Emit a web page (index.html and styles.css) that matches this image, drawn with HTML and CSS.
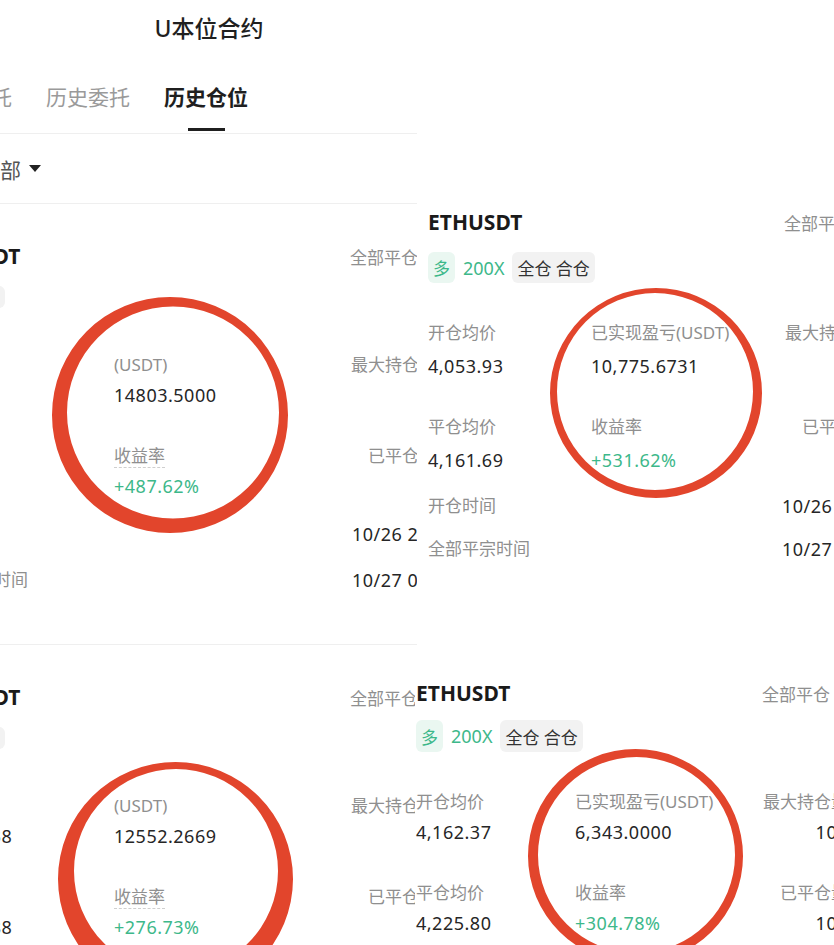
FILE: index.html
```html
<!DOCTYPE html>
<html lang="zh-CN">
<head>
    <meta charset="UTF-8">
    <title>U本位合约 - 历史仓位</title>
    <link rel="stylesheet" href="styles.css">
</head>
<body>
    <div class="collage">

        <!-- 左侧截图 -->
        <section class="panel panel-left">
            <header class="page-title">U本位合约</header>
            <nav class="tabs">
                <span class="tab">当前委托</span>
                <span class="tab">历史委托</span>
                <span class="tab active">历史仓位</span>
            </nav>
            <div class="filter">全部 <span class="caret"></span></div>

            <article class="card card-left">
                <div class="card-head">
                    <span class="symbol">ETHUSDT</span>
                    <span class="close-all">全部平仓</span>
                </div>
                <div class="tags">
                    <span class="tag tag-long">多</span>
                    <span class="tag">全仓</span>
                </div>
                <div class="stats">
                    <div class="stat"><span class="label">开仓均价</span><span class="value">4,053.9</span></div>
                    <div class="stat"><span class="label">(USDT)</span><span class="value">14803.5000</span></div>
                    <div class="stat end"><span class="label">最大持仓量</span><span class="value">5</span></div>
                    <div class="stat"><span class="label">平仓均价</span><span class="value">4,161.6</span></div>
                    <div class="stat"><span class="label dotted">收益率</span><span class="value up">+487.62%</span></div>
                    <div class="stat end"><span class="label">已平仓量</span><span class="value">5</span></div>
                </div>
                <div class="times">
                    <span class="label">开仓时间</span><span class="value">10/26 21:33:09</span>
                    <span class="label">全部平仓时间</span><span class="value">10/27 01:12:45</span>
                </div>
            </article>

            <article class="card card-left">
                <div class="card-head">
                    <span class="symbol">ETHUSDT</span>
                    <span class="close-all">全部平仓</span>
                </div>
                <div class="tags">
                    <span class="tag tag-long">多</span>
                    <span class="tag">全仓</span>
                </div>
                <div class="stats">
                    <div class="stat"><span class="label">开仓均价</span><span class="value">24,162.38</span></div>
                    <div class="stat"><span class="label">(USDT)</span><span class="value">12552.2669</span></div>
                    <div class="stat end"><span class="label">最大持仓量</span><span class="value">5</span></div>
                    <div class="stat"><span class="label">平仓均价</span><span class="value">24,225.88</span></div>
                    <div class="stat"><span class="label dotted">收益率</span><span class="value up">+276.73%</span></div>
                    <div class="stat end"><span class="label">已平仓量</span><span class="value">5</span></div>
                </div>
            </article>
        </section>

        <!-- 右上截图 -->
        <section class="panel panel-top">
            <article class="card card-top">
                <div class="card-head">
                    <span class="symbol">ETHUSDT</span>
                    <span class="close-all">全部平仓</span>
                </div>
                <div class="tags">
                    <span class="tag tag-long">多</span>
                    <span class="lev">200X</span>
                    <span class="tag">全仓 合仓</span>
                </div>
                <div class="stats">
                    <div class="stat"><span class="label">开仓均价</span><span class="value">4,053.93</span></div>
                    <div class="stat"><span class="label">已实现盈亏(USDT)</span><span class="value">10,775.6731</span></div>
                    <div class="stat end"><span class="label">最大持仓量</span><span class="value">100</span></div>
                    <div class="stat"><span class="label">平仓均价</span><span class="value">4,161.69</span></div>
                    <div class="stat"><span class="label">收益率</span><span class="value up">+531.62%</span></div>
                    <div class="stat end"><span class="label">已平仓量</span><span class="value">100</span></div>
                </div>
                <div class="times">
                    <span class="label">开仓时间</span><span class="value">10/26 21:33:09</span>
                    <span class="label">全部平宗时间</span><span class="value">10/27 01:12:45</span>
                </div>
            </article>
        </section>

        <!-- 右下截图 -->
        <section class="panel panel-bottom">
            <article class="card card-bottom">
                <div class="card-head">
                    <span class="symbol">ETHUSDT</span>
                    <span class="close-all">全部平仓</span>
                </div>
                <div class="tags">
                    <span class="tag tag-long">多</span>
                    <span class="lev">200X</span>
                    <span class="tag">全仓 合仓</span>
                </div>
                <div class="stats">
                    <div class="stat"><span class="label">开仓均价</span><span class="value">4,162.37</span></div>
                    <div class="stat"><span class="label">已实现盈亏(USDT)</span><span class="value">6,343.0000</span></div>
                    <div class="stat end"><span class="label">最大持仓量</span><span class="value">100</span></div>
                    <div class="stat"><span class="label">平仓均价</span><span class="value">4,225.80</span></div>
                    <div class="stat"><span class="label">收益率</span><span class="value up">+304.78%</span></div>
                    <div class="stat end"><span class="label">已平仓量</span><span class="value">100</span></div>
                </div>
            </article>
        </section>

        <!-- 红色圈注 -->
        <svg class="marks" width="834" height="945" viewBox="0 0 834 945">
            <g fill="#e2452c" fill-rule="evenodd">
                <path d="M52,415 a118,118 0 1,0 236,0 a118,118 0 1,0 -236,0Z M67,412.5 a106,106 0 1,0 212,0 a106,106 0 1,0 -212,0Z"/>
                <path d="M550,393 a106,105 0 1,0 212,0 a106,105 0 1,0 -212,0Z M557,391.5 a98,98.5 0 1,0 196,0 a98,98.5 0 1,0 -196,0Z"/>
                <path d="M58,879 a117.5,117 0 1,0 235,0 a117.5,117 0 1,0 -235,0Z M74,871 a102,102 0 1,0 204,0 a102,102 0 1,0 -204,0Z"/>
                <path d="M528,856 a107.5,107 0 1,0 215,0 a107.5,107 0 1,0 -215,0Z M538,855 a98.5,98 0 1,0 197,0 a98.5,98 0 1,0 -197,0Z"/>
            </g>
        </svg>
    </div>
</body>
</html>
```

FILE: styles.css
```css
body {
    margin: 0;
    background: #fff;
    font-family: 'Noto Sans', 'Noto Sans CJK SC', sans-serif;
    color: #262626;
}

.collage {
    position: relative;
    width: 834px;
    height: 945px;
    overflow: hidden;
    background: #fff;
}

/* cada captura es un recorte */
.panel {
    position: absolute;
    background: #fff;
    overflow: hidden;
}

.panel-left { left: 0; top: 0; width: 418px; height: 945px; }
.panel-top { left: 417px; top: 0; width: 417px; height: 655px; }
.panel-bottom { left: 415px; top: 655px; width: 419px; height: 290px; }

.page-title {
    height: 56px;
    line-height: 56px;
    text-align: center;
    font-size: 23px;
    font-weight: 500;
    color: #1f1f1f;
}

.tabs {
    display: flex;
    gap: 34px;
    margin-left: -72px;
    padding: 26px 0 2px;
    border-bottom: 1px solid #efefef;
    width: 500px;
}

.tab {
    font-size: 21px;
    line-height: 30px;
    color: #9a9a9a;
    white-space: nowrap;
}

.tab.active {
    color: #1f1f1f;
    font-weight: 600;
}

.tab.active::after {
    content: '';
    display: block;
    width: 37px;
    height: 3px;
    margin: 16px auto 0;
    background: #1f1f1f;
}

.tab:not(.active)::after {
    content: '';
    display: block;
    height: 3px;
    margin-top: 16px;
}

.filter {
    display: flex;
    align-items: center;
    gap: 8px;
    height: 69px;
    margin-left: -21px;
    font-size: 21px;
    color: #555;
    border-bottom: 1px solid #efefef;
    width: 460px;
}

.caret {
    width: 0;
    height: 0;
    border-left: 6px solid transparent;
    border-right: 6px solid transparent;
    border-top: 7px solid #222;
}

/* tarjeta de posición */
.card {
    white-space: nowrap;
}

.card-head {
    display: flex;
    justify-content: space-between;
    align-items: center;
    height: 26px;
}

.symbol {
    font-size: 21px;
    font-weight: 700;
    color: #1a1a1a;
}

.close-all {
    font-size: 17px;
    color: #8f8f8f;
    margin-right: 18px;
}

.tags {
    display: flex;
    align-items: center;
    gap: 8px;
    margin-top: 17px;
    height: 31px;
}

.tag {
    display: flex;
    align-items: center;
    height: 100%;
    padding: 0 5px;
    border-radius: 6px;
    background: #f2f2f2;
    font-size: 17px;
    color: #333;
}

.tag-long {
    background: #eaf7f1;
    color: #3db88a;
}

.lev {
    font-size: 18px;
    color: #3db88a;
}

.stats {
    display: grid;
    grid-template-columns: var(--cols);
    row-gap: 37px;
    margin-top: 38px;
}

.stat {
    display: flex;
    flex-direction: column;
    gap: 9px;
}

.stat.end {
    align-items: flex-end;
}

.label {
    font-size: 17px;
    line-height: 24px;
    color: #8f8f8f;
}

.label.dotted {
    align-self: flex-start;
    line-height: 23px;
    border-bottom: 1px dashed #cfcfcf;
}

.value {
    font-size: 18px;
    line-height: 24px;
    letter-spacing: 0.5px;
    color: #262626;
}

.value.up {
    color: #3db88a;
}

.times {
    display: grid;
    grid-template-columns: var(--cols);
    row-gap: 19px;
    margin-top: 22px;
}

.times .label {
    grid-column: 1 / 3;
}

/* ajustes por captura */
.card-left {
    --cols: 188px 238px 84px;
    width: 510px;
    margin-left: -74px;
    padding: 39px 0 52px;
    border-bottom: 1px solid #efefef;
}

.card-left .tags {
    height: 22px;
}

.card-left .stats {
    margin-top: 45px;
}

.card-left .stat {
    gap: 6px;
}

.card-left .times {
    margin-top: 24px;
    row-gap: 22px;
}

.card-top {
    --cols: 163px 191px 88px;
    width: 442px;
    padding: 209px 0 0 11px;
}

.card-bottom {
    --cols: 159px 188px 85px;
    width: 432px;
    padding: 25px 0 0 1px;
}

.card-bottom .tags {
    margin-top: 14px;
    height: 32px;
}

.card-bottom .stat {
    gap: 6px;
}

.marks {
    position: absolute;
    left: 0;
    top: 0;
    pointer-events: none;
}
```
